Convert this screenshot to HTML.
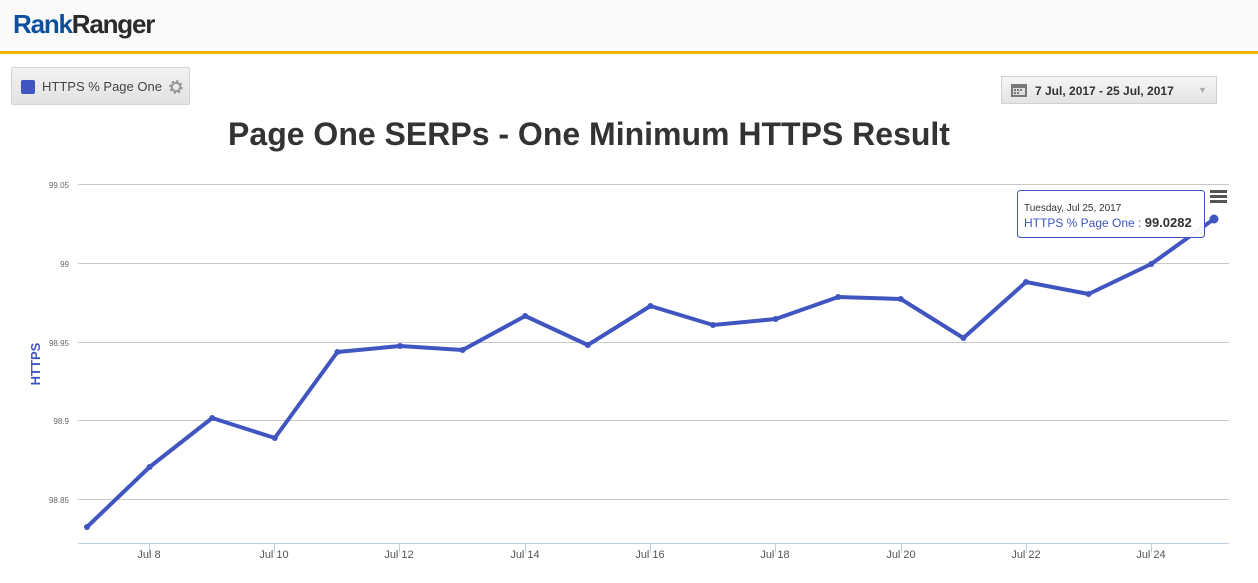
<!DOCTYPE html>
<html><head><meta charset="utf-8"><style>
body{margin:0;width:1258px;height:583px;background:#fff;font-family:"Liberation Sans",sans-serif;overflow:hidden;position:relative}
.hdr{position:absolute;left:0;top:0;width:1258px;height:51px;background:#fafafa;border-bottom:3px solid #f8b500}
.logo{position:absolute;left:13px;top:9px;font-size:26px;font-weight:bold;letter-spacing:-1.2px}
.btn{position:absolute;left:11px;top:67px;width:179px;height:38px;background:linear-gradient(#f2f2f2,#e2e2e2);border:1px solid #d4d4d4;box-sizing:border-box;border-radius:2px}
.date{position:absolute;left:1001px;top:76px;width:216px;height:28px;background:linear-gradient(#f5f5f5,#e4e4e4);border:1px solid #d0d0d0;box-sizing:border-box}
</style></head><body>
<div class="hdr"><div class="logo"><span style="color:#0e4f9c">Rank</span><span style="color:#2a2a2a">Ranger</span></div></div>
<div class="btn">
<div style="position:absolute;left:9px;top:12px;width:14px;height:14px;background:#4055c0;border-radius:2px"></div>
<div style="position:absolute;left:30px;top:11px;font-size:13px;color:#444">HTTPS % Page One</div>
<svg style="position:absolute;left:156px;top:11px" width="16" height="16" viewBox="0 0 16 16"><circle cx="8" cy="8" r="5" fill="none" stroke="#999" stroke-width="3.5" stroke-dasharray="2.2 1.7"/><circle cx="8" cy="8" r="4.2" fill="none" stroke="#999" stroke-width="2"/></svg>
</div>
<div class="date">
<svg style="position:absolute;left:9px;top:7px" width="16" height="13"><rect x="0" y="0" width="16" height="13" fill="#777"/><rect x="2" y="4" width="12" height="7" fill="#ddd"/><g fill="#777"><rect x="3" y="5" width="2" height="2"/><rect x="6" y="5" width="2" height="2"/><rect x="9" y="5" width="2" height="2"/><rect x="3" y="8" width="2" height="2"/><rect x="6" y="8" width="2" height="2"/></g></svg>
<div style="position:absolute;left:33px;top:7px;font-size:12px;font-weight:bold;color:#333">7 Jul, 2017 - 25 Jul, 2017</div>
<div style="position:absolute;left:196px;top:8px;font-size:9px;color:#aaa">▼</div>
</div>
<div style="position:absolute;left:0;width:1178px;top:116px;text-align:center;font-size:32px;font-weight:bold;color:#333;font-family:'Liberation Sans',sans-serif">Page One SERPs - One Minimum HTTPS Result</div>
<svg style="position:absolute;left:0;top:0" width="1258" height="583">
<g stroke="#c8c8c8" stroke-width="1">
<line x1="78" x2="1229" y1="184.5" y2="184.5"/><line x1="78" x2="1229" y1="263.5" y2="263.5"/><line x1="78" x2="1229" y1="342.5" y2="342.5"/><line x1="78" x2="1229" y1="420.5" y2="420.5"/><line x1="78" x2="1229" y1="499.5" y2="499.5"/>
</g>
<line x1="78" x2="1229" y1="543.5" y2="543.5" stroke="#c0d0e0"/>
<g stroke="#c0d0e0"><line x1="149.5" x2="149.5" y1="543" y2="553"/><line x1="274.5" x2="274.5" y1="543" y2="553"/><line x1="399.5" x2="399.5" y1="543" y2="553"/><line x1="525.5" x2="525.5" y1="543" y2="553"/><line x1="650.5" x2="650.5" y1="543" y2="553"/><line x1="775.5" x2="775.5" y1="543" y2="553"/><line x1="901.5" x2="901.5" y1="543" y2="553"/><line x1="1026.5" x2="1026.5" y1="543" y2="553"/><line x1="1151.5" x2="1151.5" y1="543" y2="553"/></g>
<g font-size="8" fill="#666" text-anchor="end" font-family="Liberation Sans"><text x="69" y="188">99.05</text><text x="69" y="267">99</text><text x="69" y="346">98.95</text><text x="69" y="424">98.9</text><text x="69" y="503">98.85</text></g>
<g font-size="11" fill="#555" text-anchor="middle" font-family="Liberation Sans"><text x="149" y="558">Jul 8</text><text x="274" y="558">Jul 10</text><text x="399" y="558">Jul 12</text><text x="525" y="558">Jul 14</text><text x="650" y="558">Jul 16</text><text x="775" y="558">Jul 18</text><text x="901" y="558">Jul 20</text><text x="1026" y="558">Jul 22</text><text x="1151" y="558">Jul 24</text></g>
<text transform="translate(40,364) rotate(-90)" text-anchor="middle" font-size="13" font-weight="bold" fill="#4055c0" font-family="Liberation Sans">HTTPS</text>
<polyline fill="none" stroke="#4055c0" stroke-width="4" stroke-linejoin="round" points="87,527 149.6,467 212.2,418 274.8,438 337.4,352 400,346 462.6,350 525.2,316 587.8,345 650.4,306 713,325 775.6,319 838.2,297 900.8,299 963.4,338 1026,282 1088.6,294 1151.2,264 1214,219"/>
<g fill="#4055c0"><circle cx="87" cy="527" r="3"/><circle cx="149.6" cy="467" r="3"/><circle cx="212.2" cy="418" r="3"/><circle cx="274.8" cy="438" r="3"/><circle cx="337.4" cy="352" r="3"/><circle cx="400" cy="346" r="3"/><circle cx="462.6" cy="350" r="3"/><circle cx="525.2" cy="316" r="3"/><circle cx="587.8" cy="345" r="3"/><circle cx="650.4" cy="306" r="3"/><circle cx="713" cy="325" r="3"/><circle cx="775.6" cy="319" r="3"/><circle cx="838.2" cy="297" r="3"/><circle cx="900.8" cy="299" r="3"/><circle cx="963.4" cy="338" r="3"/><circle cx="1026" cy="282" r="3"/><circle cx="1088.6" cy="294" r="3"/><circle cx="1151.2" cy="264" r="3"/><circle cx="1214" cy="219" r="4.5"/></g>
<g fill="#555"><rect x="1210" y="190" width="17" height="3"/><rect x="1210" y="195" width="17" height="3"/><rect x="1210" y="200" width="17" height="3"/></g>
<rect x="1017.5" y="190.5" width="187" height="47" rx="3" fill="#fff" fill-opacity="0.95" stroke="#4055c0"/>
<text x="1024" y="211" font-size="10" fill="#333" font-family="Liberation Sans">Tuesday, Jul 25, 2017</text>
<text x="1024" y="227" font-size="12" fill="#4055c0" font-family="Liberation Sans">HTTPS % Page One : <tspan fill="#333" font-weight="bold" font-size="13">99.0282</tspan></text>
</svg>
</body></html>
